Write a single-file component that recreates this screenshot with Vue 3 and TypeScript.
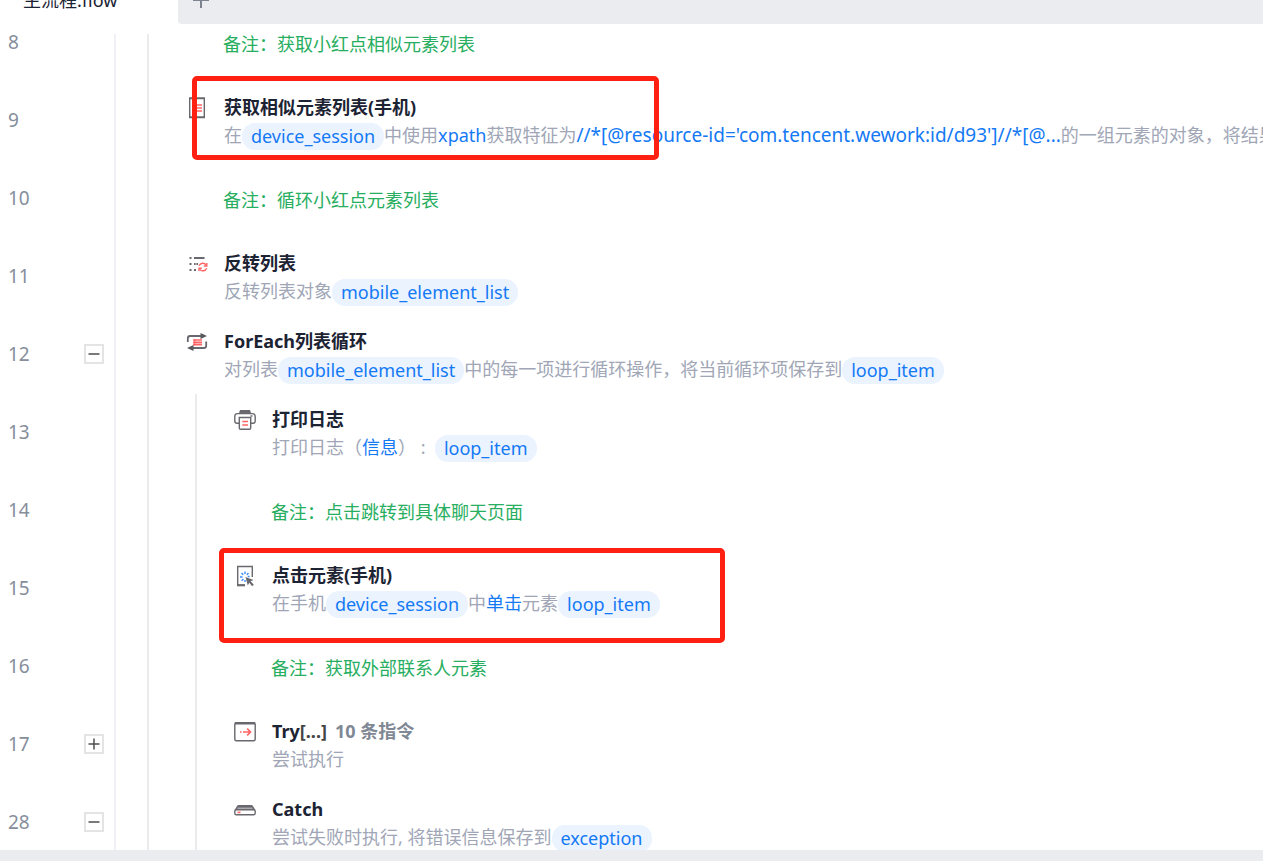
<script setup lang="ts">
type Part = { kind: 'text' | 'link' | 'path' | 'chip'; value: string }
type Row = {
  line: number
  level: number
  note?: string
  icon?: string
  title?: string
  dots?: string
  count?: string
  parts?: Part[]
  toggle?: 'open' | 'closed'
  mark?: 'upper' | 'lower'
}

const text = (value: string): Part => ({ kind: 'text', value })
const link = (value: string): Part => ({ kind: 'link', value })
const path = (value: string): Part => ({ kind: 'path', value })
const chip = (value: string): Part => ({ kind: 'chip', value })

const rows: Row[] = [
  { line: 8, level: 1, note: '备注：获取小红点相似元素列表' },
  {
    line: 9, level: 1, icon: 'list', title: '获取相似元素列表(手机)', mark: 'upper',
    parts: [
      text('在'), chip('device_session'), text('中使用'), link('xpath'), text('获取特征为'),
      path("//*[@resource-id='com.tencent.wework:id/d93']//*[@..."), text('的一组元素的对象，将结果'),
    ],
  },
  { line: 10, level: 1, note: '备注：循环小红点元素列表' },
  { line: 11, level: 1, icon: 'reverse', title: '反转列表', parts: [text('反转列表对象'), chip('mobile_element_list')] },
  {
    line: 12, level: 1, icon: 'loop', title: 'ForEach列表循环', toggle: 'open',
    parts: [text('对列表'), chip('mobile_element_list'), text('中的每一项进行循环操作，将当前循环项保存到'), chip('loop_item')],
  },
  { line: 13, level: 2, icon: 'print', title: '打印日志', parts: [text('打印日志（'), link('信息'), text('） :  '), chip('loop_item')] },
  { line: 14, level: 2, note: '备注：点击跳转到具体聊天页面' },
  {
    line: 15, level: 2, icon: 'click', title: '点击元素(手机)', mark: 'lower',
    parts: [text('在手机'), chip('device_session'), text('中'), link('单击'), text('元素'), chip('loop_item')],
  },
  { line: 16, level: 2, note: '备注：获取外部联系人元素' },
  { line: 17, level: 2, icon: 'try', title: 'Try', dots: '[...]', count: '10 条指令', toggle: 'closed', parts: [text('尝试执行')] },
  { line: 28, level: 2, icon: 'catch', title: 'Catch', toggle: 'open', parts: [text('尝试失败时执行, 将错误信息保存到'), chip('exception')] },
]
</script>

<template>
  <div class="editor">
    <header class="tabs">
      <button class="tab" type="button">主流程.flow</button>
      <div class="rest">
        <button class="add" type="button" aria-label="+">
          <svg width="18" height="18" viewBox="0 0 18 18"><path d="M9 1V17M1 9H17" stroke="#7d8490" stroke-width="2" /></svg>
        </button>
      </div>
    </header>

    <main class="flow">
      <ol class="rows">
        <li v-for="row in rows" :key="row.line" class="row">
          <div class="gutter">
            <span class="number">{{ row.line }}</span>
            <button v-if="row.toggle" class="toggle" type="button" :aria-expanded="row.toggle === 'open'" :aria-label="String(row.line)">
              <svg width="12" height="12" viewBox="0 0 12 12" fill="none" stroke="#4e4e50" stroke-width="1.5">
                <path d="M0.5 6H11.5" />
                <path v-if="row.toggle === 'closed'" d="M6 0.5V11.5" />
              </svg>
            </button>
          </div>
          <span v-for="n in row.level" :key="n" class="guide"></span>

          <svg class="icon" width="24" height="24" viewBox="0 0 24 24" fill="none" stroke="#68686e" stroke-width="1.4">
            <template v-if="row.icon === 'list'">
              <path d="M4.7 2V22M19.3 2V22" />
              <path d="M4 2.3H20M4 21.2H20" stroke-width="2" />
              <path d="M8 9H17M8 12H17M8 15H17" stroke="#ff6464" stroke-width="1.6" />
            </template>
            <template v-else-if="row.icon === 'reverse'">
              <path d="M4.5 6H6.5M9 6H19.5M4.5 12H6.5M9 12H10.6M11.4 12H13M4.5 18H6.5M9 18H11" stroke-width="1.8" />
              <g stroke="#ff6464" stroke-width="1.4">
                <path d="M14 13.8A4 4 0 0 1 21 13M21.6 16.2A4 4 0 0 1 14.8 17.4" />
                <path d="M21.8 11V14H18.8M14 19V16.2H16.8" />
              </g>
            </template>
            <template v-else-if="row.icon === 'loop'">
              <path d="M2.8 12V8.5Q2.8 6 5 6H16M21.2 11.5V15.5Q21.2 18 19 18H7" stroke-width="1.8" />
              <path d="M15.5 3L22 6L15.5 9ZM8.5 15L2 18L8.5 21Z" fill="#58585c" stroke="none" />
              <path d="M8 10H17M8 12.3H17M8 14.6H17" stroke="#ff6464" stroke-width="1.7" />
              <path d="M9.9 9V15.5" stroke="#ff6464" stroke-width="1" />
            </template>
            <template v-else-if="row.icon === 'print'">
              <path d="M7 2H17L18 5H6Z" fill="#68686e" stroke="none" />
              <path d="M6 15.3H4Q1.8 15.3 1.8 13V8.5Q1.8 5.6 4.5 5.6H19.5Q22.2 5.6 22.2 8.5V13Q22.2 15.3 20 15.3H18" />
              <path d="M6.3 9.5H17.7V20Q17.7 21.3 16.4 21.3H7.6Q6.3 21.3 6.3 20Z" />
              <path d="M17.5 8H19.5" />
              <path d="M9.3 13.5H15M9.3 17H15" stroke="#ff6464" stroke-width="1.6" />
            </template>
            <template v-else-if="row.icon === 'click'">
              <path d="M4.7 2V22M19.3 2V13M4 2.5H20" />
              <path d="M4 21.2H12" stroke-width="2.2" />
              <path d="M12 7.5V10M8.5 9L10.2 10.8M15.5 9L13.8 10.8M7 13H9.5M8.7 16.8L10.4 15M12 16V18M14.7 12.5H16.5" stroke="#3d8bff" />
              <path d="M12.5 13L20.5 16L17.6 17.3L20.8 20.7L19.2 22.2L16.2 18.8L14.8 21.5Z" fill="#68686e" stroke="none" />
            </template>
            <template v-else-if="row.icon === 'try'">
              <rect x="1.8" y="2.7" width="20.4" height="18" rx="1.5" />
              <path d="M2 3.3H22" stroke-width="2.4" />
              <path d="M7 12H8.5M10 12H17.5M14.2 8.6L17.6 12L14.2 15.4" stroke="#ff6464" stroke-width="1.6" />
            </template>
            <template v-else-if="row.icon === 'catch'">
              <path d="M6 7H18Q19.4 7 20 8L22.5 12.3H1.5L4 8Q4.6 7 6 7Z" fill="#68686e" stroke="none" />
              <path d="M4.5 10.2H19.5" stroke="#c9c9cc" stroke-width="1" />
              <rect x="1.8" y="11.8" width="20.4" height="5" rx="1.6" fill="#fff" />
              <path d="M4.5 14.4H7.5" stroke="#ff6464" stroke-width="1.6" />
            </template>
          </svg>

          <p v-if="row.note" class="note">{{ row.note }}</p>
          <div v-else class="command">
            <h3 class="title">{{ row.title }}<span v-if="row.dots" class="dots">{{ row.dots }}</span><span v-if="row.count" class="count">{{ row.count }}</span></h3>
            <p class="detail"><span v-for="(part, i) in row.parts" :key="i" :class="part.kind">{{ part.value }}</span></p>
          </div>
          <span v-if="row.mark" class="mark" :class="row.mark"></span>
        </li>
      </ol>
    </main>
    <footer class="scrollbar"></footer>
  </div>
</template>

<style>
body {
  margin: 0;
  background: #fff;
}
</style>

<style scoped>
.editor {
  display: flex;
  flex-direction: column;
  height: 100vh;
  overflow: hidden;
  background: #fff;
  font-family: "Noto Sans", "Noto Sans CJK SC", sans-serif;
  font-size: 18px;
  color: #1c2333;
}
button {
  padding: 0;
  border: 0;
  background: none;
  font: inherit;
  color: inherit;
}
.tabs {
  display: flex;
  align-items: flex-end;
  height: 24px;
  flex: none;
  margin-bottom: 10px;
}
.tab {
  width: 178px;
  height: 48px;
  padding-left: 23px;
  line-height: 48px;
  text-align: left;
  white-space: nowrap;
}
.rest {
  flex: 1;
  height: 48px;
  display: flex;
  align-items: center;
  padding-left: 14px;
  background: #ebecf0;
  border-bottom-left-radius: 4px;
}
.add,
.add svg {
  display: block;
}
.flow {
  flex: 1;
  min-height: 0;
  overflow: hidden;
}
.rows {
  margin: -30px 0 0;
  padding: 0;
  list-style: none;
}
.row {
  position: relative;
  display: flex;
  height: 78px;
}
.gutter {
  flex: none;
  box-sizing: border-box;
  display: flex;
  align-items: center;
  width: 116px;
  margin-right: 31px;
  padding: 0 0 2px 8px;
  border-right: 2px solid #f0f0f6;
}
.number {
  width: 76px;
  font-size: 19px;
  color: #868e9c;
}
.toggle {
  display: grid;
  place-items: center;
  box-sizing: border-box;
  width: 20px;
  height: 20px;
  border: 2px solid #e4e4e4;
  background: #fff;
}
.guide {
  flex: none;
  box-sizing: border-box;
  width: 38px;
  border-left: 2px solid #ebebed;
}
.guide:has(+ .guide) {
  width: 48px;
}
.icon {
  flex: none;
  margin: 14px 14px 0 0;
}
.note {
  margin: 0;
  line-height: 80px;
  white-space: nowrap;
  color: #27ae60;
}
.command {
  padding: 10px 0 0 1px;
  white-space: nowrap;
}
.title {
  margin: 0;
  font-size: 18px;
  font-weight: 700;
  line-height: 30px;
}
.dots {
  color: #444;
}
.count {
  margin-left: 8px;
  color: #7f8894;
}
.detail {
  display: flex;
  align-items: flex-start;
  margin: 0;
  height: 28px;
  line-height: 27px;
  color: #a0a6b6;
  white-space: pre;
}
.link,
.path {
  color: #1479f5;
}
.path {
  font-size: 19px;
}
.chip {
  margin-top: 1px;
  padding: 0 9px;
  border-radius: 13px;
  background: #ebf3ff;
  color: #1479f5;
}
.mark {
  position: absolute;
  box-sizing: border-box;
  border: 5px solid #ff2012;
  border-radius: 5px;
}
.upper {
  left: 192px;
  top: -6px;
  width: 467px;
  height: 84px;
}
.lower {
  left: 219px;
  top: -2px;
  width: 506px;
  height: 95px;
  z-index: 1;
}
.scrollbar {
  flex: none;
  height: 11px;
  background: #ebecf0;
}
</style>
